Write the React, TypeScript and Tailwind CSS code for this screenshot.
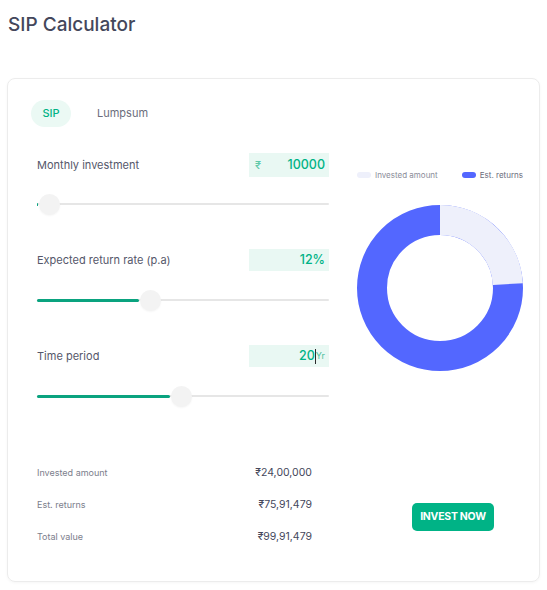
import React from 'react';

const font = { fontFamily: 'Inter, "Noto Sans", sans-serif' };

const Slider = ({ fill }: { fill: number }) => (
  <div className="relative h-[20px] w-full flex items-center">
    <div className="h-[2px] w-full bg-[#e6e6e6] rounded-full" />
    <div
      className="absolute left-0 h-[3px] bg-[#0aa37f] rounded-full"
      style={{ width: `${fill}px` }}
    />
    <div
      className="absolute w-[21px] h-[21px] rounded-full bg-[#f3f3f3] shadow-[0_1px_2px_rgba(0,0,0,0.04)]"
      style={{ left: `${fill + 1}px` }}
    />
  </div>
);

const InputRow = ({ label, children }: { label: string; children: React.ReactNode }) => (
  <div className="flex items-center justify-between h-[24px]">
    <span className="text-[11px] text-[#55576a]">{label}</span>
    {children}
  </div>
);

const Donut = () => {
  const r = 68;
  const c = 2 * Math.PI * r;
  const invested = 2400000 / 9991479;
  return (
    <svg width="166" height="166" viewBox="0 0 166 166">
      <circle cx="83" cy="83" r={r} fill="none" stroke="#5367ff" strokeWidth="30" />
      <circle
        cx="83"
        cy="83"
        r={r}
        fill="none"
        stroke="#eef0fb"
        strokeWidth="30"
        strokeDasharray={`${c * invested} ${c}`}
        transform="rotate(-90 83 83)"
      />
    </svg>
  );
};

export default function App() {
  return (
    <div className="bg-white w-[547px] h-[590px]" style={font}>
      <h1 className="pl-[8px] pt-[12px] text-[19px] leading-[26px] font-medium text-[#44475b]">
        SIP Calculator
      </h1>

      <div className="mt-[40px] ml-[7px] w-[533px] h-[504px] border border-[#ececec] rounded-[8px] shadow-[0_1px_3px_rgba(0,0,0,0.04)] pl-[29px] pr-[16px] pt-[21px]">
        <div className="flex">
          {/* left controls */}
          <div className="w-[292px]">
            <div className="flex items-center -ml-[6px] h-[27px]">
              <div className="h-[27px] w-[40px] rounded-[14px] bg-[#ebf9f4] flex items-center justify-center text-[11px] font-medium text-[#00b386]">
                SIP
              </div>
              <span className="ml-[26px] text-[11px] text-[#6b6d7c]">Lumpsum</span>
            </div>

            <div className="mt-[26px]">
              <InputRow label="Monthly investment">
                <div className="w-[80px] h-[24px] bg-[#e9f8f3] flex items-center justify-between pl-[6px] pr-[4px] text-[12.5px] font-medium text-[#00b386]">
                  <span className="text-[11px] text-[#5fc9a9]">₹</span>
                  <span>10000</span>
                </div>
              </InputRow>
            </div>
            <div className="mt-[17px]">
              <Slider fill={1} />
            </div>

            <div className="mt-[34px]">
              <InputRow label="Expected return rate (p.a)">
                <div className="w-[80px] h-[22px] bg-[#e9f8f3] flex items-center justify-end px-[4px] text-[12.5px] font-medium text-[#00b386]">
                  12%
                </div>
              </InputRow>
            </div>
            <div className="mt-[18px]">
              <Slider fill={102} />
            </div>

            <div className="mt-[34px]">
              <InputRow label="Time period">
                <div className="w-[80px] h-[22px] bg-[#e9f8f3] flex items-center justify-end px-[4px] text-[12.5px] font-medium text-[#00b386]">
                  <span>20</span>
                  <span className="w-px h-[15px] bg-[#2b2b2b]" />
                  <span className="text-[9px] font-normal text-[#4fbf9c]">Yr</span>
                </div>
              </InputRow>
            </div>
            <div className="mt-[18px]">
              <Slider fill={133} />
            </div>
          </div>

          {/* right chart */}
          <div className="ml-[28px] w-[166px]">
            <div className="mt-[70px] flex items-center justify-between h-[10px]">
              <div className="flex items-center gap-[4px]">
                <span className="w-[14px] h-[6px] rounded-full bg-[#eef0fb]" />
                <span className="text-[8px] text-[#8a8c99]">Invested amount</span>
              </div>
              <div className="flex items-center gap-[4px]">
                <span className="w-[14px] h-[6px] rounded-full bg-[#5367ff]" />
                <span className="text-[8px] text-[#6b6d7c]">Est. returns</span>
              </div>
            </div>
            <div className="mt-[25px]">
              <Donut />
            </div>
          </div>
        </div>

        {/* summary */}
        <div className="mt-[59px] flex">
          <div className="w-[275px] flex flex-col gap-[16px]">
            <div className="flex justify-between items-center h-[16px]">
              <span className="text-[9px] text-[#7c7e8c]">Invested amount</span>
              <span className="text-[10.5px] text-[#44475b]">₹24,00,000</span>
            </div>
            <div className="flex justify-between items-center h-[16px]">
              <span className="text-[9px] text-[#7c7e8c]">Est. returns</span>
              <span className="text-[10.5px] text-[#44475b]">₹75,91,479</span>
            </div>
            <div className="flex justify-between items-center h-[16px]">
              <span className="text-[9px] text-[#7c7e8c]">Total value</span>
              <span className="text-[10.5px] text-[#44475b]">₹99,91,479</span>
            </div>
          </div>
          <div className="ml-[100px] self-end mb-[14px]">
            <button className="w-[82px] h-[28px] rounded-[5px] bg-[#00b386] text-white text-[10.5px] font-bold tracking-tight">
              INVEST NOW
            </button>
          </div>
        </div>
      </div>
    </div>
  );
}
